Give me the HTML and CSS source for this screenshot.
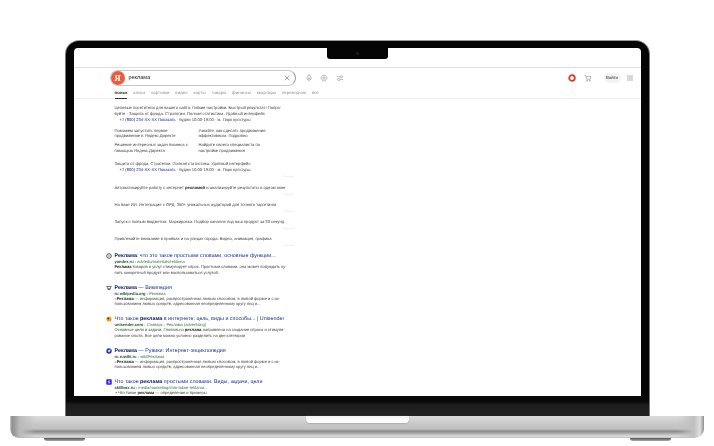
FILE: index.html
```html
<!DOCTYPE html>
<html lang="ru">
<head>
<meta charset="utf-8">
<title>реклама — Яндекс</title>
<link rel="stylesheet" href="styles.css">
</head>
<body>
<div class="page">
  <div class="lid">
    <div class="notch"><span class="camera"></span></div>
    <div class="screen">
      <div class="topbar"></div>
      <header class="header">
        <div class="search-row">
          <div class="search">
            <span class="logo">Я</span>
            <span class="query">реклама</span>
            <svg class="clear" viewBox="0 0 8 8"><path d="M1 1l6 6M7 1L1 7"/></svg>
          </div>
          <div class="tools">
            <svg class="tool" viewBox="0 0 10 10"><rect x="3.5" y="1" width="3" height="5" rx="1.5"/><path d="M2 4.5a3 3 0 006 0M5 7.5V9"/></svg>
            <svg class="tool" viewBox="0 0 10 10"><path d="M3.5 1.500h3L9 5 6.500 8.500h-3L1 5z"/><circle cx="5" cy="5" r="1.500"/></svg>
            <svg class="tool" viewBox="0 0 10 10"><path d="M1 3.500h4M8 3.500h1M1 7h1M5 7h4"/><circle cx="6.500" cy="3.500" r="1.300"/><circle cx="3.500" cy="7" r="1.300"/></svg>
          </div>
          <div class="account">
            <svg class="ring" viewBox="0 0 8 8"><circle cx="4" cy="4" r="2.800"/></svg>
            <svg class="cart" viewBox="0 0 10 10"><path d="M.5 1.500h1.500l1.200 5h4.600l1-3.500H2.500"/><circle cx="3.800" cy="8.300" r=".6"/><circle cx="7.300" cy="8.300" r=".6"/></svg>
            <span class="login">Войти</span>
            <span class="menu"></span>
          </div>
        </div>
        <nav class="tabs">
          <span class="tab active">поиск</span>
          <span class="tab">алиса</span>
          <span class="tab">картинки</span>
          <span class="tab">видео</span>
          <span class="tab">карты</span>
          <span class="tab">товары</span>
          <span class="tab">финансы</span>
          <span class="tab">квартиры</span>
          <span class="tab">переводчик</span>
          <span class="tab">все</span>
        </nav>
      </header>
      <main class="results">
        <section class="ad ad-first">
          <p>Целевые посетители для вашего сайта. Гибкие настройки. Быстрый результат! Попро-</p>
          <p>буйте · Защита от фрода. Стратегии. Полная статистика. Удобный интерфейс</p>
          <p class="contact"><span class="phone">+7 (800) 234-XX-XX Показать</span> · будни 10:00-19:00 · м. Парк культуры</p>
          <div class="sitelinks">
            <p>Поможем запустить первое<br>продвижение в Яндекс.Директе</p>
            <p>Узнайте, как сделать продвижение<br>эффективным. Подробно</p>
            <p>Решение интересных задач бизнеса с<br>помощью Яндекс.Директа</p>
            <p>Найдите своего специалиста по<br>настройке продвижения</p>
          </div>
          <p class="protect">Защита от фрода. Стратегии. Полная статистика. Удобный интерфейс</p>
          <p class="contact"><span class="phone">+7 (800) 234-XX-XX Показать</span> · будни 10:00-19:00 · м. Парк культуры</p>
          <span class="adlabel">Реклама</span>
        </section>
        <section class="ad"><p>Автоматизируйте работу с интернет <b>рекламой</b> и анализируйте результаты в одном окне</p><span class="adlabel">Реклама</span></section>
        <section class="ad"><p>На базе ИИ. Интеграция с ОРД. 350+ уникальных аудиторий для точного таргетинга</p><span class="adlabel">Реклама</span></section>
        <section class="ad"><p>Запуск с любым бюджетом. Маркировка. Подбор каналов под ваш продукт за 30 секунд</p><span class="adlabel">Реклама</span></section>
        <section class="ad"><p>Привлекайте внимание в пробках и на улицах города. Видео, анимация, графика</p><span class="adlabel">Реклама</span></section>

        <article class="item">
          <svg class="fav" viewBox="0 0 6 6"><circle cx="3" cy="3" r="2.300" fill="none" stroke="#555" stroke-width="1"/><circle cx="3" cy="3" r=".8" fill="#777"/></svg>
          <div class="body">
            <h3 class="title"><b>Реклама</b>: что это такое простыми словами, основные функции...</h3>
            <p class="url"><b>yandex.ru</b> › adv/edu/materials/reklama</p>
            <p class="snip"><b>Реклама</b> товаров и услуг стимулирует спрос. Простыми словами, она может побуждать ку-</p>
            <p class="snip">пить конкретный продукт или воспользоваться услугой.</p>
          </div>
        </article>
        <article class="item">
          <svg class="fav" viewBox="0 0 6 6"><path d="M.5 1.500h5M1 1.500l1.400 3.500L3 3l.7 2L5 1.500" fill="none" stroke="#555" stroke-width=".8"/></svg>
          <div class="body">
            <h3 class="title"><b>Реклама</b> — Википедия</h3>
            <p class="url"><b>ru.wikipedia.org</b> › Реклама</p>
            <p class="snip">«<b>Реклама</b> — информация, распространённая любым способом, в любой форме и с ис-</p>
            <p class="snip">пользованием любых средств, адресованная неопределённому кругу лиц и...</p>
          </div>
        </article>
        <article class="item">
          <svg class="fav" viewBox="0 0 6 6"><circle cx="3" cy="3" r="2.600" fill="#f2a81d"/><circle cx="2.200" cy="2.400" r=".9" fill="#333"/><circle cx="4.200" cy="3.800" r=".6" fill="#c55"/></svg>
          <div class="body">
            <h3 class="title">Что такое <b>реклама</b> в интернете: цель, виды и способы... | Unisender</h3>
            <p class="url"><b>unisender.com</b> › Словарь › Реклама (advertising)</p>
            <p class="snip">Основные цели и задачи. Глобально <b>реклама</b> направлена на создание спроса и стимули-</p>
            <p class="snip">рование сбыта. Все цели можно условно разделить на две категории</p>
          </div>
        </article>
        <article class="item">
          <svg class="fav" viewBox="0 0 6 6"><circle cx="3" cy="3" r="2.700" fill="#3a2fc4"/><path d="M3 .4a2.700 2.700 0 012.700 2.600H3z" fill="#1fa67a"/><circle cx="3" cy="3" r=".9" fill="#fff"/></svg>
          <div class="body">
            <h3 class="title"><b>Реклама</b> — Рувики: Интернет-энциклопедия</h3>
            <p class="url"><b>ru.ruwiki.ru</b> › wiki/Реклама</p>
            <p class="snip">«<b>Реклама</b> — информация, распространённая любым способом, в любой форме и с ис-</p>
            <p class="snip">пользованием любых средств, адресованная неопределённому кругу лиц и...</p>
          </div>
        </article>
        <article class="item">
          <svg class="fav" viewBox="0 0 6 6"><rect x=".3" y=".3" width="5.400" height="5.400" rx=".8" fill="#2b23d8"/><path d="M4 2H2.300v1h1.400v1H2" fill="none" stroke="#fff" stroke-width=".6"/></svg>
          <div class="body">
            <h3 class="title">Что такое <b>реклама</b> простыми словами. Виды, задачи, цели</h3>
            <p class="url"><b>skillbox.ru</b> › media/marketing/chto-takoe-reklama...</p>
            <p class="snip bullet">• Что такое <b>реклама</b> — определение и примеры</p>
          </div>
        </article>
      </main>
    </div>
    <div class="chin"></div>
  </div>
  <div class="base">
    <div class="thumb"></div>
  </div>
  <div class="feet"><span class="foot"></span><span class="foot"></span></div>
</div>
</body>
</html>
```

FILE: styles.css
```css
* { box-sizing: border-box; margin: 0; padding: 0; }
html, body { background: #fff; overflow: hidden; }
body { font-family: "Liberation Sans", Arial, sans-serif; color: #2a2a2a; text-rendering: geometricPrecision; }

.page { width: 714px; height: 446px; display: flex; flex-direction: column; align-items: center; padding-top: 41px; }

.lid { position: relative; width: 583px; height: 375px; padding: 7px 8px 0; background: #050505; border-radius: 13px 13px 0 0; box-shadow: 0 -1px 0 #9a9a9a, 1px 0 0 #777, -1px 0 0 #777; display: flex; flex-direction: column; }
.notch { position: absolute; left: 261px; top: 7px; width: 61px; height: 10.500px; display: flex; align-items: center; justify-content: center; background: #050505; border-radius: 0 0 3px 3px; z-index: 2; }
.camera { width: 3px; height: 3px; border-radius: 50%; background: #1c1c24; }
.screen { width: 567px; height: 348px; flex: none; background: #fff; border-radius: 4px 4px 0 0; overflow: hidden; }
.chin { flex: 1; margin: 0 -8px; background: linear-gradient(#060606 0, #0a0a0a 30%, #1c1c1c 42%, #222 100%); }

.topbar { height: 20px; border-bottom: 1px solid #dedede; }
.header { height: 31px; border-bottom: 1px solid #f0f0f0; filter: blur(.2px); }
.search-row { display: flex; align-items: center; height: 20px; padding: 0 8px 0 36px; }
.search { display: flex; align-items: center; width: 186px; height: 16px; border: 1px solid #c9c9c9; border-right-color: #9c9c9c; border-radius: 8px; padding-right: 5px; gap: 4px; }
.logo { width: 14px; height: 14px; flex: none; border-radius: 50%; background: #ed5b3e; color: #fff; font-size: 9px; line-height: 14px; text-align: center; font-family: "Liberation Serif", serif; font-weight: bold; }
.query { flex: 1; font-size: 5.500px; color: #222; }
.clear { width: 6px; height: 6px; fill: none; stroke: #777; stroke-width: .9; }
.tools { display: flex; gap: 7.500px; margin-left: 9px; }
.tool { width: 8px; height: 8px; fill: none; stroke: #8b8b8b; stroke-width: .7; }
.account { display: flex; align-items: center; margin-left: auto; }
.ring { width: 8px; height: 8px; fill: none; stroke: #d93a22; stroke-width: 1.800; }
.cart { width: 8px; height: 8px; margin-left: 8px; fill: none; stroke: #777; stroke-width: .6; }
.login { width: 17px; height: 10px; margin-left: 12px; border-radius: 5px; background: #f3f3f3; color: #222; font-size: 4.300px; line-height: 10px; text-align: center; }
.menu { width: 6px; height: 6px; margin-left: 6px; background: #d9d9d9; }

.tabs { display: flex; gap: 5.700px; padding-left: 41px; height: 11px; }
.tab { font-size: 4.300px; line-height: 9px; height: 11px; color: #8d8d8d; letter-spacing: .1px; }
.tab.active { color: #222; font-weight: bold; border-bottom: 1px solid #333; padding-bottom: 1px; }

.results { padding: 6px 0 0 32px; font-size: 4.150px; line-height: 5.500px; color: #444; filter: blur(.2px); }
.ad { position: relative; width: 176px; margin: 0 0 11.500px 9px; white-space: nowrap; }
.ad p { line-height: 5.500px; }
.ad b { color: #222; }
.ad-first { margin-bottom: 13px; }
.contact { padding-left: 5px; margin-top: .500px; }
.phone { color: #1b1f7e; }
.sitelinks { display: grid; grid-template-columns: 84px 84px; row-gap: 3.500px; margin-top: 5.500px; }
.protect { margin-top: 7.500px; }
.adlabel { position: absolute; right: -3px; bottom: -6.500px; font-size: 2.500px; line-height: 4px; color: #dcdcdc; }

.item { display: flex; gap: 3px; margin-bottom: 9.500px; white-space: nowrap; }
.fav { width: 6px; height: 6px; flex: none; }
.title { font-size: 5.350px; line-height: 6px; font-weight: normal; color: #1b1f8f; }
.title b { color: #14146e; }
.url { font-size: 4.050px; line-height: 5px; color: #2f7d32; }
.url b { color: #1c5a20; }
.snip { font-size: 4.050px; line-height: 5.500px; color: #484848; }
.snip b { color: #1f1f1f; }
.bullet { padding-left: 1px; }

.base { position: relative; width: 694px; height: 22px; flex: none; border-radius: 0 0 9px 9px; background:
  linear-gradient(90deg, #d0d0d0 0, #8e8e8e 2px, #bcbcbc 10px, transparent 26px, transparent 668px, #c0c0c0 684px, #e0e0e0 690px, #8e8e8e 694px),
  linear-gradient(#dcdcdc 0, #c6c6c6 40%, #c2c2c2 58%, #8c8c8c 70%, #a8a8a8 78%, #dcdcdc 92%, #bdbdbd 100%); }
.thumb { position: absolute; left: 296px; top: 0; width: 103px; height: 7px; background: linear-gradient(#f4f4f4, #fff); border-radius: 0 0 4px 4px; box-shadow: 0 .5px 1px #999; }
.feet { display: flex; justify-content: space-between; width: 627px; height: 3px; flex: none; }
.foot { width: 41px; height: 3px; background: linear-gradient(#555, #aaa); border-radius: 0 0 8px 8px; }
```
